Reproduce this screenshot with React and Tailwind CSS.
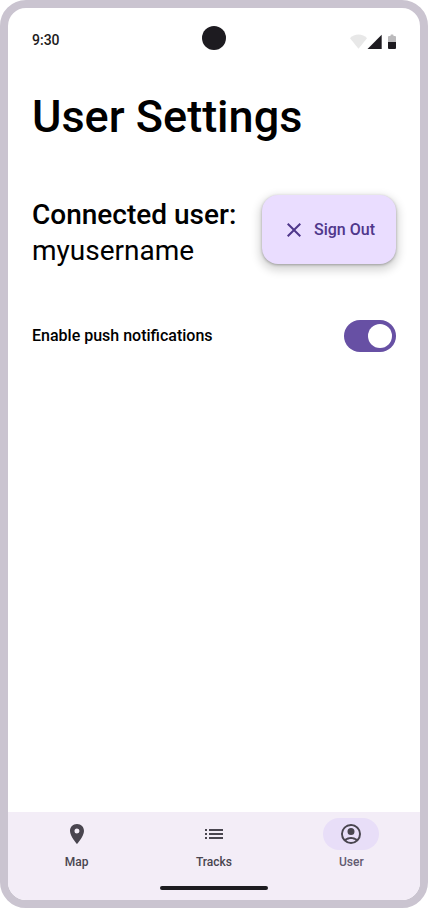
import { useState } from "react";

function StatusBar() {
  return (
    <header className="grid grid-cols-3 items-end px-6 pt-[18px] text-[#1d1b20]">
      <time className="text-sm leading-5 font-medium">9:30</time>
      <span className="size-6 justify-self-center rounded-full bg-[#1d1b20]" />
      <svg className="h-4 w-[46px] justify-self-end" viewBox="0 0 46 16" fill="currentColor" role="img" aria-label="Wi-Fi, signal and battery">
        <path d="M8.5 14.7 0 4.2C2.2 2 5.2.6 8.5.6s6.3 1.4 8.5 3.6Z" opacity=".1" />
        <path d="M31.7.7V15H17.5Z" />
        <path d="M38 3a1 1 0 0 1 1-1h1.5V1.3c0-.5.3-.8.8-.8h1.4c.5 0 .8.3.8.8V2H45a1 1 0 0 1 1 1v5h-8Z" opacity=".3" />
        <path d="M38 8h8v6a1 1 0 0 1-1 1h-6a1 1 0 0 1-1-1Z" />
      </svg>
    </header>
  );
}

const tabs = [
  {
    name: "Map",
    path: "M12 2C7.8 2 5 5.2 5 9c0 5.200 7 13 7 13s7-7.800 7-13c0-3.800-2.800-7-7-7Zm0 9.500a2.500 2.500 0 1 1 0-5 2.500 2.500 0 0 1 0 5Z",
  },
  {
    name: "Tracks",
    path: "M3 13h2v-2H3v2Zm0 4h2v-2H3v2Zm0-8h2V7H3v2Zm4 4h14v-2H7v2Zm0 4h14v-2H7v2ZM7 7v2h14V7H7Z",
  },
  {
    name: "User",
    path: "M12 2a10 10 0 1 0 0 20 10 10 0 0 0 0-20ZM7.350 18.500C8.660 17.560 10.260 17 12 17s3.340.56 4.650 1.500A7.950 7.950 0 0 1 12 20a7.950 7.950 0 0 1-4.650-1.500Zm10.790-1.380A9.950 9.950 0 0 0 12 15c-2.320 0-4.450.79-6.140 2.120A8 8 0 1 1 20 12a7.950 7.950 0 0 1-1.860 5.120ZM12 6a3.500 3.500 0 1 0 0 7 3.500 3.500 0 0 0 0-7Z",
  },
];

function NavigationBar({ active }) {
  return (
    <footer className="bg-[#f3edf7]">
      <nav className="grid grid-cols-3 pt-1.5">
        {tabs.map(({ name, path }) => {
          const selected = name === active;
          return (
            <a
              key={name}
              href={`#${name.toLowerCase()}`}
              aria-current={selected ? "page" : undefined}
              className="flex flex-col items-center gap-1"
            >
              <span className={`flex h-8 w-14 items-center justify-center rounded-full ${selected ? "bg-[#e8def8]" : ""}`}>
                <svg className="size-6 text-[#49454f]" viewBox="0 0 24 24" fill="currentColor" aria-hidden="true">
                  <path fillRule="evenodd" d={path} />
                </svg>
              </span>
              <span className={`text-xs leading-4 font-medium ${selected ? "text-[#625b71]" : "text-[#49454f]"}`}>
                {name}
              </span>
            </a>
          );
        })}
      </nav>
      <div className="flex justify-center pt-4 pb-2.5">
        <span className="h-1 w-[108px] rounded-full bg-[#1d1b20]" />
      </div>
    </footer>
  );
}

export default function App() {
  const [push, setPush] = useState(true);

  return (
    <div className="flex min-h-screen flex-col overflow-hidden rounded-[26px] border-8 border-[#cac4d0] bg-white font-[Roboto,sans-serif] text-black">
      <StatusBar />
      <main className="flex-1 px-6 pt-[41px]">
        <h1 className="text-[45px] leading-[52px] font-medium">User Settings</h1>
        <section className="mt-[52px] flex items-start justify-between">
          <dl className="pt-0.5 text-[28px] leading-9">
            <dt className="font-medium">Connected user:</dt>
            <dd>myusername</dd>
          </dl>
          <button
            type="button"
            className="flex h-[69px] w-[134px] items-center gap-2 rounded-2xl bg-[#eaddff] pl-5 text-base leading-6 font-medium whitespace-nowrap text-[#4f378b] shadow-[0_1px_3px_rgba(0,0,0,0.3),0_4px_8px_3px_rgba(0,0,0,0.15)]"
          >
            <svg className="size-6" viewBox="0 0 24 24" fill="currentColor" aria-hidden="true">
              <path d="M19 6.410 17.590 5 12 10.590 6.410 5 5 6.410 10.590 12 5 17.590 6.410 19 12 13.410 17.590 19 19 17.590 13.410 12Z" />
            </svg>
            Sign Out
          </button>
        </section>
        <section className="mt-[51px] flex items-center justify-between">
          <label htmlFor="push" className="text-base leading-6 font-medium">
            Enable push notifications
          </label>
          <input
            id="push"
            type="checkbox"
            role="switch"
            checked={push}
            onChange={(event) => setPush(event.target.checked)}
            className="flex h-8 w-[52px] appearance-none items-center rounded-full bg-[#79747e] p-1 before:size-6 before:rounded-full before:bg-white checked:justify-end checked:bg-[#6750a4]"
          />
        </section>
      </main>
      <NavigationBar active="User" />
    </div>
  );
}
